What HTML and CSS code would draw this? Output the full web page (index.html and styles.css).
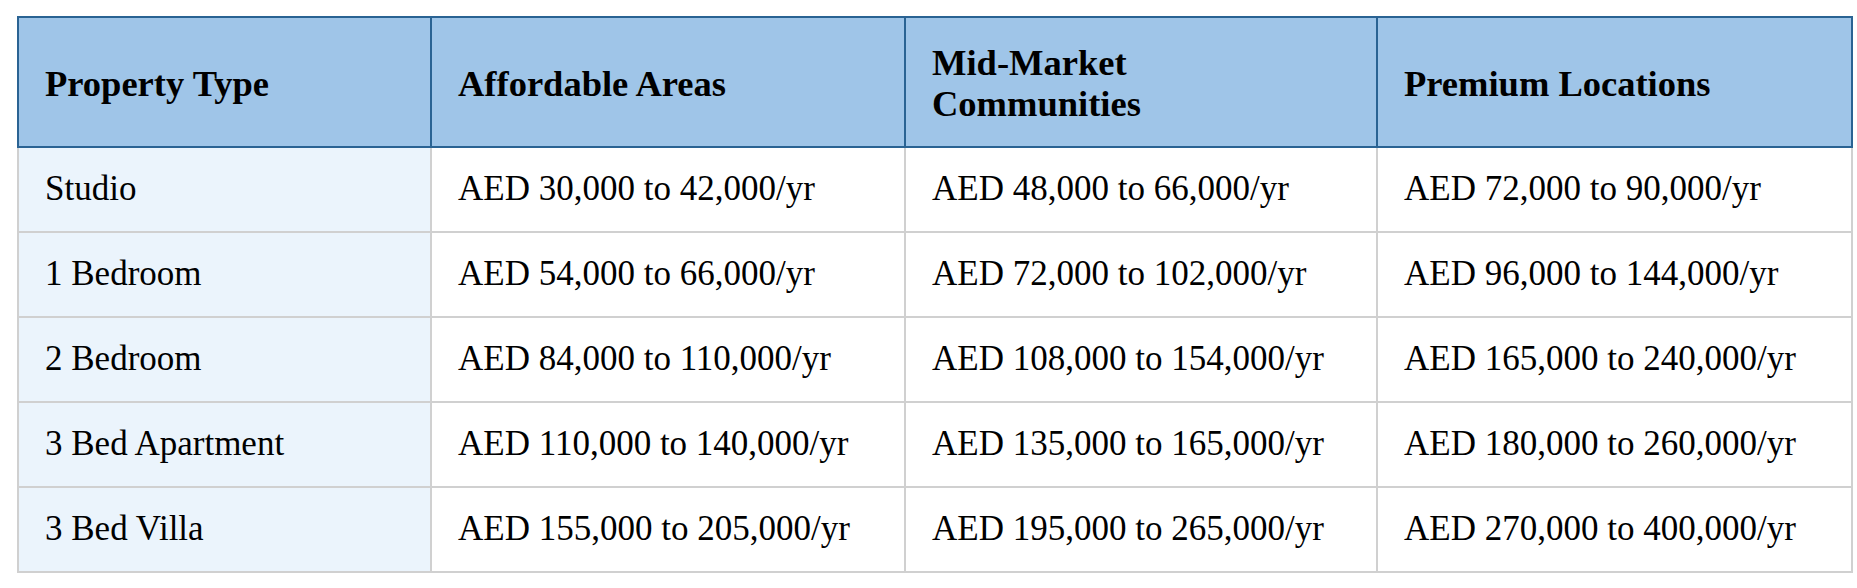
FILE: index.html
```html
<!DOCTYPE html>
<html>
<head>
<meta charset="utf-8">
<link rel="stylesheet" href="styles.css">
</head>
<body>
<div class="wrap">
<table class="rent">
  <colgroup>
    <col class="c1"><col class="c2"><col class="c3"><col class="c4">
  </colgroup>
  <thead>
    <tr>
      <th>Property Type</th>
      <th>Affordable Areas</th>
      <th>Mid-Market<br>Communities</th>
      <th>Premium Locations</th>
    </tr>
  </thead>
  <tbody>
    <tr><td class="type">Studio</td><td>AED 30,000 to 42,000/yr</td><td>AED 48,000 to 66,000/yr</td><td>AED 72,000 to 90,000/yr</td></tr>
    <tr><td class="type">1 Bedroom</td><td>AED 54,000 to 66,000/yr</td><td>AED 72,000 to 102,000/yr</td><td>AED 96,000 to 144,000/yr</td></tr>
    <tr><td class="type">2 Bedroom</td><td>AED 84,000 to 110,000/yr</td><td>AED 108,000 to 154,000/yr</td><td>AED 165,000 to 240,000/yr</td></tr>
    <tr><td class="type">3 Bed Apartment</td><td>AED 110,000 to 140,000/yr</td><td>AED 135,000 to 165,000/yr</td><td>AED 180,000 to 260,000/yr</td></tr>
    <tr><td class="type">3 Bed Villa</td><td>AED 155,000 to 205,000/yr</td><td>AED 195,000 to 265,000/yr</td><td>AED 270,000 to 400,000/yr</td></tr>
  </tbody>
</table>
</div>
</body>
</html>
```
FILE: styles.css
```css
html, body {
  margin: 0;
  padding: 0;
  background: #ffffff;
}
.wrap {
  padding: 16px 6px 0 17px;
}
.rent {
  width: 1834px;
  border-collapse: collapse;
  table-layout: fixed;
  font-family: "Liberation Serif", "Times New Roman", serif;
  color: #000;
  border: 2px solid #d0d0d0;
}
.c1 { width: 413px; }
.c2 { width: 474px; }
.c3 { width: 472px; }
.c4 { width: 475px; }
.rent th {
  background: #9fc5e8;
  border: 2px solid #2a6393;
  font-size: 36.5px;
  font-weight: bold;
  line-height: 41px;
  text-align: left;
  padding: 24px 26px 22px 26px;
  vertical-align: middle;
}
.rent td {
  border: 2px solid #d0d0d0;
  font-size: 35px;
  line-height: 40px;
  padding: 21px 26px 22px 26px;
  vertical-align: middle;
}
.rent td.type {
  background: #ebf4fc;
}
```
